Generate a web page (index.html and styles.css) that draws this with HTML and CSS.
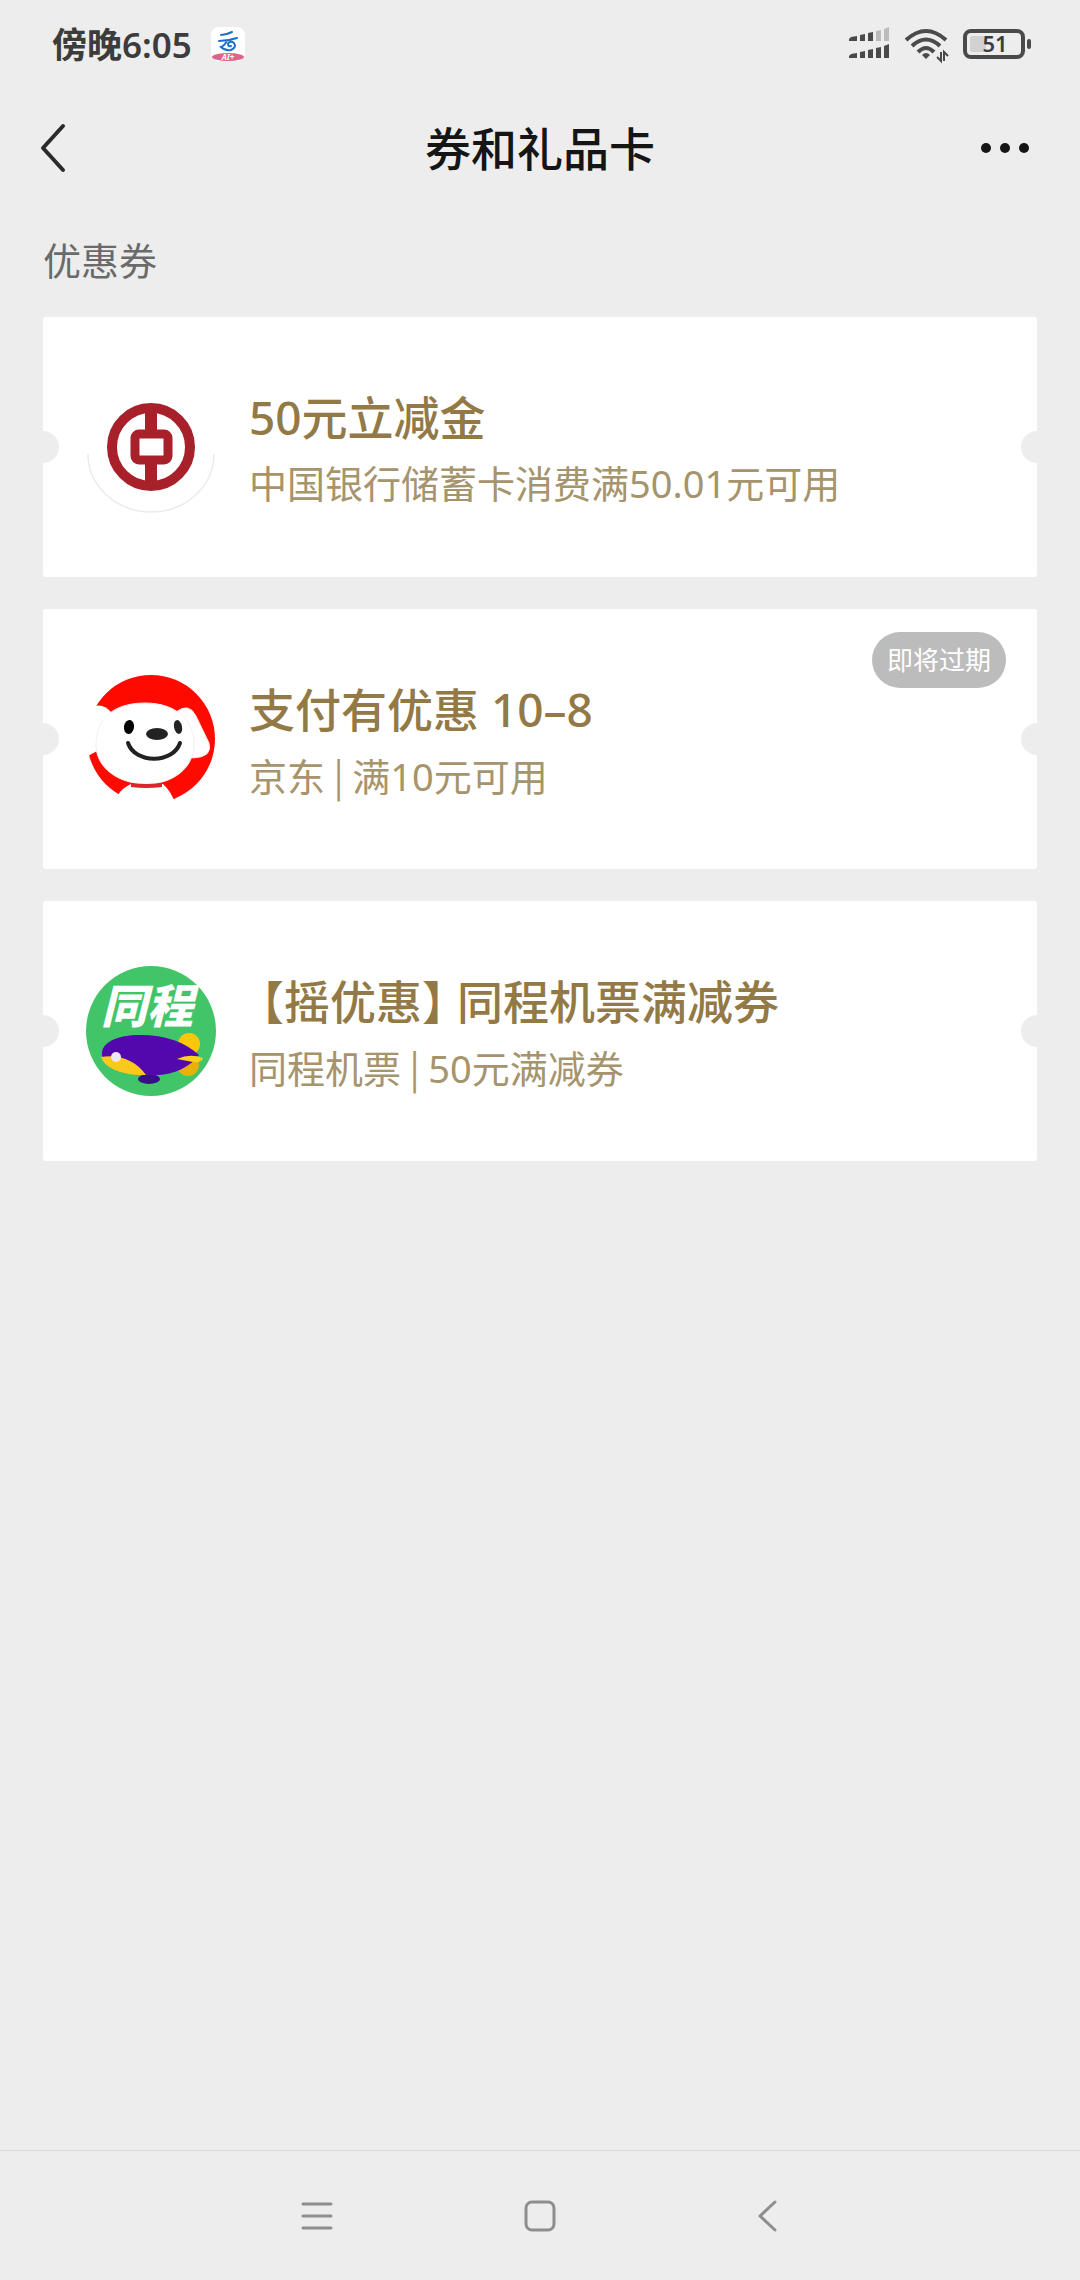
FILE: index.html
```html
<!DOCTYPE html>
<html lang="zh-CN">

<head>
  <meta charset="UTF-8">
  <meta name="viewport" content="width=device-width, initial-scale=1.0">
  <title>券和礼品卡</title>
  <link rel="stylesheet" href="styles.css">
</head>

<body>

  <!-- Status bar -->
  <div class="status-bar">
    <span class="clock">傍晚6:05</span>
    <svg class="app-icon" viewBox="0 0 36 36" aria-hidden="true">
      <rect x="1" width="34" height="34" rx="8" fill="#fff" />
      <path d="M11 8Q16 8 22 5M9 14Q18 14 27 11M17 14Q14 19 11 20Q15 24 21 23Q27 20 24 16Q20 13 18 17Q18 20 21 19"
        fill="none" stroke="#1b6fc9" stroke-width="2" stroke-linecap="round" />
      <ellipse cx="18" cy="30" rx="16" ry="4" fill="#dc6488" />
      <text class="app-tag" x="18" y="33" text-anchor="middle">AI+</text>
    </svg>
    <div class="status-icons">
      <svg width="42" height="34" viewBox="0 0 42 34" aria-hidden="true">
        <g fill="#4a4a4a">
          <path d="M0 11l2-2 6-1v5H0zM11 7l5-1v7h-5zM19 5l5-1v9h-5z" />
          <path d="M0 28l2-2 6-1v5H0zM11 24l5-1v7h-5zM19 22l5-1v9h-5zM27 20l5-1v11h-5zM35 18l5-2v14h-5z" />
        </g>
        <path d="M27 3l5-1v11h-5zM35 1l5-2v14h-5z" fill="#bbb" />
      </svg>
      <svg width="44" height="34" viewBox="0 0 44 34" aria-hidden="true">
        <g fill="none" stroke="#4a4a4a" stroke-width="4">
          <path d="M1 12Q21-6 41 12" />
          <path d="M7 18Q21 5 35 18" />
          <path d="M13 24Q21 16 29 24" />
        </g>
        <path d="M17 27Q21 23 25 27L21 31z" fill="#4a4a4a" />
        <path d="M36 24v9l-4-4M39 33v-9l4 4" fill="none" stroke="#4a4a4a" stroke-width="2" />
      </svg>
      <svg width="69" height="34" viewBox="0 0 69 34" aria-hidden="true">
        <rect x="7" y="8" width="16" height="16" rx="2" fill="#d2d2d2" />
        <rect x="2" y="3" width="58" height="26" rx="6" fill="none" stroke="#4a4a4a" stroke-width="4" />
        <rect x="64" y="11" width="4" height="10" rx="2" fill="#4a4a4a" />
        <text class="battery-level" x="32" y="24" text-anchor="middle">51</text>
      </svg>
    </div>
  </div>

  <!-- Page header -->
  <header class="header">
    <button class="icon-button" type="button" aria-label="返回">
      <svg width="24" height="48" viewBox="0 0 24 48">
        <path d="M23 2L3 24L23 46" fill="none" stroke="#2b2b2b" stroke-width="4" stroke-linejoin="round" stroke-linecap="round" />
      </svg>
    </button>
    <h1>券和礼品卡</h1>
    <button class="icon-button more" type="button" aria-label="更多">
      <svg width="50" height="12" viewBox="0 0 50 12" fill="#151515">
        <circle cx="6" cy="6" r="5" />
        <circle cx="25" cy="6" r="5" />
        <circle cx="44" cy="6" r="5" />
      </svg>
    </button>
  </header>

  <!-- Coupon list -->
  <main class="coupons">
    <h2>优惠券</h2>

    <a class="coupon" href="#boc">
      <svg class="logo" viewBox="0 0 130 130" aria-hidden="true">
        <path d="M2 72A63 58 0 0 0 128 72" fill="none" stroke="#ebebeb" stroke-width="1.500" />
        <circle cx="65" cy="65" r="39" fill="none" stroke="#a8212a" stroke-width="10" />
        <path d="M65 24V52M65 78V106" stroke="#a8212a" stroke-width="12" />
        <rect x="49" y="52" width="33" height="26" rx="4" fill="#fff" stroke="#a8212a" stroke-width="9" />
      </svg>
      <div class="info">
        <h3>50元立减金</h3>
        <p>中国银行储蓄卡消费满50.01元可用</p>
      </div>
    </a>

    <a class="coupon" href="#jd">
      <svg class="logo" viewBox="0 0 130 130" aria-hidden="true">
        <defs>
          <clipPath id="jdClip">
            <circle cx="65" cy="65" r="65" />
          </clipPath>
        </defs>
        <circle cx="65" cy="65" r="64" fill="#fe0a00" />
        <path d="M0 36Q15 26 25 38L24 70L0 83z" fill="#fff" />
        <path d="M32 121Q36 114 45 110L77 110Q85 117 90 131L32 131z" fill="#fff" />
        <g clip-path="url(#jdClip)">
          <path d="M90 38Q103 28 110 42L123 69Q127 83 107 84L98 80z" fill="#fff" stroke="#fbe3e0" />
          <path d="M10 71C10 45 27 29 59 29C91 29 108 47 108 70C108 94 87 110 60 110C33 110 10 94 10 71z" fill="#fff" stroke="#f6efee" />
          <path d="M45 109Q60 111 76 109V113Q60 115 45 113z" fill="#dc252c" />
        </g>
        <ellipse cx="43" cy="53" rx="5" ry="7" transform="rotate(8 43 53)" fill="#000" />
        <ellipse cx="92" cy="53" rx="4" ry="7" transform="rotate(-12 92 53)" fill="#222" />
        <ellipse cx="71" cy="60" rx="11" ry="6" fill="#222" />
        <path d="M42 69C49 90 87 90 94 69" fill="none" stroke="#222" stroke-width="4" stroke-linecap="round" />
      </svg>
      <div class="info">
        <h3>支付有优惠 10–8</h3>
        <p>京东<span class="divider"> | </span>满10元可用</p>
      </div>
      <span class="badge">即将过期</span>
    </a>

    <a class="coupon" href="#tongcheng">
      <svg class="logo" viewBox="0 0 130 130" aria-hidden="true">
        <circle cx="65" cy="65" r="65" fill="#42c468" />
        <text class="logo-text" x="15" y="57">同程</text>
        <circle cx="103" cy="78" r="11" fill="#fec70b" />
        <circle cx="102" cy="99" r="11" fill="#e9b00c" />
        <ellipse cx="63" cy="113" rx="11" ry="5" fill="#36108a" />
        <path d="M16 90C14 76 32 69 54 69C80 69 99 76 113 89C104 101 88 109 70 109C50 108 22 104 16 90z" fill="#5208ac" />
        <path d="M15 91C34 88 50 95 60 109C42 110 19 104 15 91z" fill="#fbc91b" />
        <ellipse cx="30" cy="91" rx="5" ry="5" fill="#efe9f6" />
        <path d="M91 93Q104 87 117 92Q116 97 107 96Z" fill="#ffd21a" />
      </svg>
      <div class="info">
        <h3><span class="bracket-open">【</span>摇优惠<span class="bracket-close">】</span>同程机票满减券</h3>
        <p>同程机票<span class="divider"> | </span>50元满减券</p>
      </div>
    </a>
  </main>

  <!-- System navigation -->
  <nav class="nav-bar">
    <button class="nav-button" type="button" aria-label="最近任务">
      <svg width="32" height="32" viewBox="0 0 32 32">
        <path d="M3 4H31M3 16H31M3 28H31" />
      </svg>
    </button>
    <button class="nav-button" type="button" aria-label="主屏幕">
      <svg width="32" height="32" viewBox="0 0 32 32">
        <rect x="2" y="2" width="28" height="28" rx="6" />
      </svg>
    </button>
    <button class="nav-button" type="button" aria-label="返回上一级">
      <svg width="32" height="32" viewBox="0 0 32 32">
        <path d="M27 2L12 16L27 30" />
      </svg>
    </button>
  </nav>

</body>

</html>
```
FILE: styles.css
```css
* {
  box-sizing: border-box;
}

body {
  background-color: #ededed;
  font-family: "Noto Sans", "Noto Sans CJK SC", sans-serif;
  display: flex;
  flex-direction: column;
  min-height: 100vh;
  margin: 0;
}

h1,
h2,
h3,
p {
  margin: 0;
}

button {
  background: none;
  border: none;
  padding: 0;
  cursor: pointer;
}

svg {
  display: block;
  flex: none;
  overflow: visible;
}

/* Status bar */
.status-bar {
  display: flex;
  align-items: center;
  height: 90px;
  padding: 0 48px 0 52px;
}

.clock {
  color: #3c3c3c;
  font-size: 35px;
  font-weight: 600;
  line-height: 40px;
}

.app-icon {
  width: 36px;
  height: 36px;
  margin-left: 18px;
}

.app-tag {
  fill: #fff;
  font-size: 8px;
  font-style: italic;
  font-weight: 700;
}

.status-icons {
  display: flex;
  align-items: center;
  gap: 14px;
  margin-left: auto;
}

.battery-level {
  fill: #3c3c3c;
  font-size: 22px;
  font-weight: 600;
}

/* Header */
.header {
  display: flex;
  align-items: center;
  justify-content: space-between;
  height: 116px;
  padding: 0 40px;
}

.header h1 {
  color: #151515;
  font-size: 46px;
  font-weight: 500;
  line-height: 60px;
}

.icon-button {
  display: flex;
  align-items: center;
  width: 70px;
  height: 60px;
}

.more {
  justify-content: center;
}

/* Coupons */
.coupons {
  flex: 1;
  display: flex;
  flex-direction: column;
  gap: 32px;
  padding: 29px 43px;
}

.coupons h2 {
  color: #6a6a6a;
  font-size: 38px;
  font-weight: 400;
  line-height: 50px;
}

.coupon {
  position: relative;
  display: flex;
  align-items: center;
  gap: 33px;
  min-height: 260px;
  padding: 0 43px;
  border-radius: 3px;
  background-color: #fff;
  text-decoration: none;
  overflow: hidden;
}

/* half-round notches cut into both sides */
.coupon::before,
.coupon::after {
  content: "";
  position: absolute;
  top: 50%;
  width: 32px;
  height: 32px;
  margin-top: -16px;
  border-radius: 50%;
  background-color: #ededed;
}

.coupon::before {
  left: -16px;
}

.coupon::after {
  right: -16px;
}

.logo {
  width: 130px;
  height: 130px;
}

.logo-text {
  fill: #fff;
  font-size: 46px;
  font-style: italic;
  font-weight: 900;
}

.info {
  padding-top: 8px;
}

.info h3 {
  color: #927946;
  font-size: 46px;
  font-weight: 500;
  line-height: 64px;
}

.info p {
  color: #a5946c;
  font-size: 38px;
  line-height: 68px;
}

.divider {
  font-family: "Noto Sans CJK SC", sans-serif;
}

.bracket-open,
.bracket-close {
  font-feature-settings: "halt";
}

.bracket-open {
  padding-left: 12px;
}

.bracket-close {
  padding-right: 12px;
}

.badge {
  position: absolute;
  top: 23px;
  right: 31px;
  padding: 0 15px;
  border-radius: 28px;
  background-color: #bcbcbc;
  color: #fff;
  font-size: 26px;
  line-height: 56px;
}

/* System navigation */
.nav-bar {
  display: flex;
  justify-content: center;
  align-items: center;
  gap: 160px;
  height: 130px;
  border-top: 1px solid #d8d8d8;
}

.nav-button {
  display: flex;
  justify-content: center;
  align-items: center;
  width: 64px;
  height: 64px;
}

.nav-button svg {
  fill: none;
  stroke: #8e8e8e;
  stroke-width: 3px;
  stroke-linecap: round;
  stroke-linejoin: round;
}
```
